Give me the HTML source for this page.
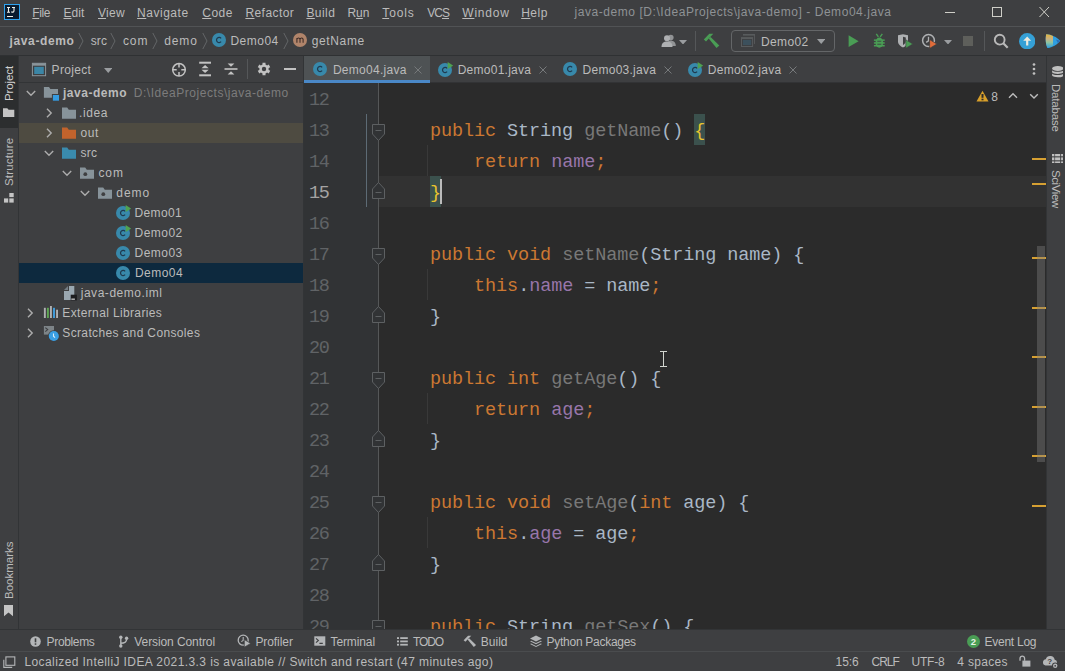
<!DOCTYPE html>
<html><head><meta charset="utf-8"><style>
*{box-sizing:border-box;margin:0;padding:0}
html,body{width:1065px;height:671px;overflow:hidden;background:#3e3f41}
body{font-family:"Liberation Sans",sans-serif;font-size:12px;color:#bbbbbb;position:relative}
.abs{position:absolute}
.t{position:absolute;white-space:pre;line-height:16px}
u{text-decoration:underline;text-underline-offset:.6px;text-decoration-thickness:1px}
.vt{position:absolute;white-space:nowrap;font-size:11.5px;transform-origin:0 0;line-height:14px}
.ln{position:absolute;left:0;width:24.500px;text-align:right;font-family:"Liberation Mono",monospace;font-size:18.500px;letter-spacing:-1.3px;color:#606366;line-height:31px;height:31px}
.cl{position:absolute;left:126.100px;font-family:"Liberation Mono",monospace;font-size:18.500px;letter-spacing:-.1px;color:#a9b7c6;line-height:31px;height:31px;white-space:pre}
.k{color:#cc7832}.f{color:#9876aa}.g{color:#787878}.y{color:#e6c42e}
.mk{position:absolute;left:1032px;width:14px;height:2px;background:#d6a032}
</style></head><body>
<!-- frame lines -->
<div class="abs" style="left:0;top:26px;width:1065px;height:1px;background:#515355"></div>
<div class="abs" style="left:0;top:55px;width:1065px;height:1px;background:#2f3133"></div>
<!-- left strip -->
<div class="abs" style="left:0;top:56px;width:18px;height:72px;background:#2c2e2f"></div>
<div class="abs" style="left:18px;top:56px;width:1px;height:574px;background:#323436"></div>
<!-- right strip -->
<div class="abs" style="left:1047px;top:56px;width:18px;height:574px;background:#3e3f41"></div>
<div class="abs" style="left:1046px;top:56px;width:1px;height:574px;background:#323436"></div>
<!-- project panel -->
<div class="abs" style="left:19px;top:82px;width:284px;height:1px;background:#323436"></div>
<div class="abs" style="left:19px;top:123px;width:284px;height:20px;background:#4e4b41"></div>
<div class="abs" style="left:19px;top:263px;width:284px;height:20px;background:#0d293e"></div>
<div class="abs" style="left:303px;top:56px;width:1px;height:574px;background:#323436"></div>
<!-- tabs -->
<div class="abs" style="left:304px;top:56px;width:126px;height:27px;background:#4e5254"></div>
<div class="abs" style="left:304px;top:80px;width:126px;height:3px;background:#4a88c7"></div>
<div class="abs" style="left:430px;top:82px;width:616px;height:1px;background:#323335"></div>
<!-- editor -->
<div class="abs" style="left:304px;top:83px;width:742px;height:547px;background:#2b2b2b;overflow:hidden">
  <div class="abs" style="left:74px;top:93px;width:668px;height:31px;background:#323232"></div>
  <div class="abs" style="left:0;top:0;width:74px;height:547px;background:#313335"></div>
  <div class="abs" style="left:74px;top:0;width:1px;height:547px;background:#555758"></div>
  <div class="abs" style="left:62px;top:31px;width:1px;height:93px;background:#5d6b75"></div>
  <!-- brace highlights -->
  <div class="abs" style="left:390px;top:31px;width:11px;height:31px;background:#3b514d"></div>
  <div class="abs" style="left:126px;top:93px;width:11px;height:31px;background:#3b514d"></div>
  <!-- indent guides -->
  <div class="abs" style="left:123px;top:62px;width:1px;height:31px;background:#393939"></div>
  <div class="abs" style="left:123px;top:186px;width:1px;height:31px;background:#393939"></div>
  <div class="abs" style="left:123px;top:310px;width:1px;height:31px;background:#393939"></div>
  <div class="abs" style="left:123px;top:434px;width:1px;height:31px;background:#393939"></div>
<span class="ln" style="top:2px">12</span>
<span class="ln" style="top:33px">13</span>
<span class="cl" style="top:33px"><span class="k">public</span> String <span class="g">getName</span>() <span class="y">{</span></span>
<span class="ln" style="top:64px">14</span>
<span class="cl" style="top:64px">    <span class="k">return</span> <span class="f">name</span><span class="k">;</span></span>
<span class="ln" style="top:95px;color:#a4a3a3">15</span>
<span class="cl" style="top:95px"><span class="y">}</span></span>
<span class="ln" style="top:126px">16</span>
<span class="ln" style="top:157px">17</span>
<span class="cl" style="top:157px"><span class="k">public void</span> <span class="g">setName</span>(String name) {</span>
<span class="ln" style="top:188px">18</span>
<span class="cl" style="top:188px">    <span class="k">this</span>.<span class="f">name</span> = name<span class="k">;</span></span>
<span class="ln" style="top:219px">19</span>
<span class="cl" style="top:219px">}</span>
<span class="ln" style="top:250px">20</span>
<span class="ln" style="top:281px">21</span>
<span class="cl" style="top:281px"><span class="k">public int</span> <span class="g">getAge</span>() {</span>
<span class="ln" style="top:312px">22</span>
<span class="cl" style="top:312px">    <span class="k">return</span> <span class="f">age</span><span class="k">;</span></span>
<span class="ln" style="top:343px">23</span>
<span class="cl" style="top:343px">}</span>
<span class="ln" style="top:374px">24</span>
<span class="ln" style="top:405px">25</span>
<span class="cl" style="top:405px"><span class="k">public void</span> <span class="g">setAge</span>(<span class="k">int</span> age) {</span>
<span class="ln" style="top:436px">26</span>
<span class="cl" style="top:436px">    <span class="k">this</span>.<span class="f">age</span> = age<span class="k">;</span></span>
<span class="ln" style="top:467px">27</span>
<span class="cl" style="top:467px">}</span>
<span class="ln" style="top:498px">28</span>
<span class="ln" style="top:529px">29</span>
<span class="cl" style="top:529px"><span class="k">public</span> String <span class="g">getSex</span>() {</span>
<svg class="abs" style="left:67px;top:41px" width="15" height="18" viewBox="0 0 15 18"><path d="M1.500 .5h12v9.500l-6 6.500-6-6.500z" fill="#313335" stroke="#5d6062" stroke-width="1"/><path d="M4.500 6.500h6" stroke="#5d6062" stroke-width="1"/></svg>
<svg class="abs" style="left:67px;top:165px" width="15" height="18" viewBox="0 0 15 18"><path d="M1.500 .5h12v9.500l-6 6.500-6-6.500z" fill="#313335" stroke="#5d6062" stroke-width="1"/><path d="M4.500 6.500h6" stroke="#5d6062" stroke-width="1"/></svg>
<svg class="abs" style="left:67px;top:289px" width="15" height="18" viewBox="0 0 15 18"><path d="M1.500 .5h12v9.500l-6 6.500-6-6.500z" fill="#313335" stroke="#5d6062" stroke-width="1"/><path d="M4.500 6.500h6" stroke="#5d6062" stroke-width="1"/></svg>
<svg class="abs" style="left:67px;top:413px" width="15" height="18" viewBox="0 0 15 18"><path d="M1.500 .5h12v9.500l-6 6.500-6-6.500z" fill="#313335" stroke="#5d6062" stroke-width="1"/><path d="M4.500 6.500h6" stroke="#5d6062" stroke-width="1"/></svg>
<svg class="abs" style="left:67px;top:537px" width="15" height="18" viewBox="0 0 15 18"><path d="M1.500 .5h12v9.500l-6 6.500-6-6.500z" fill="#313335" stroke="#5d6062" stroke-width="1"/><path d="M4.500 6.500h6" stroke="#5d6062" stroke-width="1"/></svg>
<svg class="abs" style="left:67px;top:98px" width="15" height="18" viewBox="0 0 15 18"><path d="M1.500 17.500h12v-9.500l-6-6.500-6 6.500z" fill="#313335" stroke="#5d6062" stroke-width="1"/><path d="M4.500 11.500h6" stroke="#5d6062" stroke-width="1"/></svg>
<svg class="abs" style="left:67px;top:222px" width="15" height="18" viewBox="0 0 15 18"><path d="M1.500 17.500h12v-9.500l-6-6.500-6 6.500z" fill="#313335" stroke="#5d6062" stroke-width="1"/><path d="M4.500 11.500h6" stroke="#5d6062" stroke-width="1"/></svg>
<svg class="abs" style="left:67px;top:346px" width="15" height="18" viewBox="0 0 15 18"><path d="M1.500 17.500h12v-9.500l-6-6.500-6 6.500z" fill="#313335" stroke="#5d6062" stroke-width="1"/><path d="M4.500 11.500h6" stroke="#5d6062" stroke-width="1"/></svg>
<svg class="abs" style="left:67px;top:470px" width="15" height="18" viewBox="0 0 15 18"><path d="M1.500 17.500h12v-9.500l-6-6.500-6 6.500z" fill="#313335" stroke="#5d6062" stroke-width="1"/><path d="M4.500 11.500h6" stroke="#5d6062" stroke-width="1"/></svg>
  <div class="abs" style="left:136px;top:96px;width:2px;height:25px;background:#bbbbbb"></div>
</div>
<div class="mk" style="top:158px"></div>
<div class="mk" style="top:183px"></div>
<div class="mk" style="top:257px"></div>
<div class="mk" style="top:307px"></div>
<div class="mk" style="top:356px"></div>
<div class="mk" style="top:406px"></div>
<div class="mk" style="top:455px"></div>
<div class="mk" style="top:505px"></div>
<div class="abs" style="left:1037px;top:246px;width:8px;height:216px;background:rgba(128,128,128,.4)"></div>
<!-- mouse ibeam -->
<div class="abs" style="left:663px;top:351px;width:1px;height:16px;background:#d2d5cf"></div>
<div class="abs" style="left:660px;top:351px;width:7px;height:1px;background:#d2d5cf"></div>
<div class="abs" style="left:660px;top:366px;width:7px;height:1px;background:#d2d5cf"></div>
<!-- bottom -->
<div class="abs" style="left:0;top:630px;width:1065px;height:41px;background:#3e3f41"></div>
<div class="abs" style="left:0;top:629px;width:1065px;height:1px;background:#323436"></div>
<div class="abs" style="left:0;top:651px;width:1065px;height:1px;background:#4a4c4e"></div>
<svg class="abs" style="left:4px;top:4px" width="16" height="16" viewBox="0 0 16 16"><rect width="16" height="16" fill="#2fa3ef"/><rect x="1" y="1" width="14" height="14" fill="#0a1b2e"/><path d="M3 3.500h3M4.500 3.500v4.700M3 8.200h3M8 3.500h3M10 3.500v3.300c0 1.500-1.400 1.700-2.700 .9" stroke="#f2f2ea" stroke-width="1.100" fill="none"/><rect x="3" y="12" width="6" height="1" fill="#f2f2ea"/></svg>
<svg class="abs" style="left:935px;top:0px" width="130" height="26" viewBox="0 0 130 26"><g stroke="#cfcfc8" stroke-width="1" fill="none"><path d="M10 12.500H20"/><rect x="57.500" y="7.500" width="9" height="9"/><path d="M104.500 7l9.500 10M114 7l-9.500 10"/></g></svg>
<svg class="abs" style="left:77.5px;top:32px" width="6" height="18" viewBox="0 0 6 18"><path d="M0.8 1L5 9 .8 17" fill="none" stroke="#646668" stroke-width="1"/></svg>
<svg class="abs" style="left:110.2px;top:32px" width="6" height="18" viewBox="0 0 6 18"><path d="M0.8 1L5 9 .8 17" fill="none" stroke="#646668" stroke-width="1"/></svg>
<svg class="abs" style="left:151.5px;top:32px" width="6" height="18" viewBox="0 0 6 18"><path d="M0.8 1L5 9 .8 17" fill="none" stroke="#646668" stroke-width="1"/></svg>
<svg class="abs" style="left:202px;top:32px" width="6" height="18" viewBox="0 0 6 18"><path d="M0.8 1L5 9 .8 17" fill="none" stroke="#646668" stroke-width="1"/></svg>
<svg class="abs" style="left:282.5px;top:32px" width="6" height="18" viewBox="0 0 6 18"><path d="M0.8 1L5 9 .8 17" fill="none" stroke="#646668" stroke-width="1"/></svg>
<svg class="abs" style="left:211px;top:32.2px" width="16" height="16" viewBox="0 0 16 16"><circle cx="8" cy="8" r="7" fill="#3889ab"/><path d="M10.100 9.700A2.600 2.600 0 1 1 10.100 6.300" fill="none" stroke="#1f3a4f" stroke-width="1.250"/></svg>
<svg class="abs" style="left:291.9px;top:32.2px" width="16" height="16" viewBox="0 0 16 16"><circle cx="8" cy="8" r="7" fill="#b0846a"/><path d="M4.900 10.700V5.900M4.900 7.400c.4-1.900 2.900-2 3.100 0v3.300M8 7.400c.4-1.900 2.900-2 3.100 0v3.300" fill="none" stroke="#3a2a26" stroke-width="1.050"/></svg>
<svg class="abs" style="left:661px;top:34px" width="16" height="14" viewBox="0 0 16 14"><g fill="#aeb0b2"><circle cx="9.800" cy="3.600" r="2.800" opacity=".75"/><path d="M5.500 12c0-4 2-5.200 4.300-5.200S14.800 8 14.800 12z" opacity=".75"/><circle cx="6" cy="4.200" r="3"/><path d="M.5 13c0-4.200 2.200-5.600 5.500-5.600S11.500 8.800 11.500 13z"/></g></svg>
<svg class="abs" style="left:679px;top:39.75px" width="8" height="4.5" viewBox="0 0 8 4.5"><path d="M0 0H8 L4 4.5z" fill="#9a9da0"/></svg>
<div class="abs" style="left:695px;top:31px;width:1px;height:20px;background:#555759"></div>
<svg class="abs" style="left:703px;top:33px" width="17" height="16" viewBox="0 0 17 16"><g fill="#4a9d55"><path d="M0.800 6.600L6.300 0.800H10.300L3 8.500z"/><path d="M5.700 5.600L7.600 4L16.300 12.600L13.500 15.100z"/></g></svg>
<div class="abs" style="left:731px;top:30px;width:104px;height:22px;border:1px solid #646668;border-radius:4px"></div>
<svg class="abs" style="left:740px;top:33px" width="16" height="15" viewBox="0 0 16 15"><g fill="#585b5d"><rect x="3" y="1" width="12" height="1.600"/><rect x="14.100" y="1" width=".9" height="9.900"/><rect x="1" y="4.100" width="12.100" height="9.900"/></g><rect x="2" y="6.100" width="10.100" height="6.900" fill="#3e3f41"/><rect x="2.900" y="6.900" width="8.300" height="5.200" fill="#3c505c"/></svg>
<svg class="abs" style="left:817.1px;top:39px" width="8.4" height="5" viewBox="0 0 8.4 5"><path d="M0 0H8.4 L4.2 5z" fill="#9a9da0"/></svg>
<svg class="abs" style="left:848px;top:35px" width="12" height="13" viewBox="0 0 12 13"><path d="M.6 .3v11.700L10.600 6.150z" fill="#4a9d55"/></svg>
<svg class="abs" style="left:871px;top:33px" width="16" height="16" viewBox="0 0 16 16"><g fill="#4a9d55"><ellipse cx="8.300" cy="9.700" rx="3.800" ry="5.100"/><rect x="2.900" y="6.400" width="10.800" height="1.500"/><rect x="2.900" y="9.200" width="10.800" height="1.500"/><rect x="2.900" y="12" width="10.800" height="1.500"/><path d="M5.300 .9L7.400 3.900M11.300 .9L9.200 3.900" stroke="#4a9d55" stroke-width="1.400" fill="none"/></g><path d="M6.300 8.300h4M6.300 11.200h4" stroke="#3e3f41" stroke-width="1.100" opacity=".85"/></svg>
<svg class="abs" style="left:897px;top:34px" width="17" height="15" viewBox="0 0 17 15"><path d="M1 1.200l5-1 5 1v6c0 3.200-2.400 5-5 6.200C3.400 12.200 1 10.400 1 7.200z" fill="#aeb0b2"/><path d="M6 2.800v8.200c1.800-1 2.800-2.200 2.800-4V3.400z" fill="#3e3f41"/><path d="M8.800 5.800v8.400l7-4.200z" fill="#4a9d55" stroke="#3e3f41" stroke-width=".6"/></svg>
<svg class="abs" style="left:921px;top:33px" width="17" height="16" viewBox="0 0 17 16"><circle cx="7.500" cy="7.500" r="5.900" fill="none" stroke="#aeb0b2" stroke-width="1.500"/><path d="M7.500 3.800v4l-2.300 1.600" fill="none" stroke="#aeb0b2" stroke-width="1.300"/><path d="M8.600 6.600v8.800l7.300-4.400z" fill="#e06c3a" stroke="#3e3f41" stroke-width=".7"/></svg>
<svg class="abs" style="left:943.8px;top:39.75px" width="8" height="4.5" viewBox="0 0 8 4.5"><path d="M0 0H8 L4 4.5z" fill="#9a9da0"/></svg>
<div class="abs" style="left:963px;top:36px;width:10px;height:10px;background:#5e5f5b"></div>
<div class="abs" style="left:984px;top:31px;width:1px;height:20px;background:#555759"></div>
<svg class="abs" style="left:993px;top:33px" width="17" height="17" viewBox="0 0 17 17"><circle cx="6.700" cy="6.700" r="4.900" fill="none" stroke="#b9b9b9" stroke-width="1.900"/><path d="M10.300 10.300l4.400 4.400" stroke="#b9b9b9" stroke-width="2.200"/></svg>
<svg class="abs" style="left:1018.8px;top:32.7px" width="16.4" height="16.4" viewBox="0 0 16.4 16.4"><circle cx="8.200" cy="8.200" r="8.200" fill="#35a0d6"/><path d="M8.200 3.400l4 4.400H9.300V12.500H7.100V7.800H4.200z" fill="#eceade"/></svg>
<svg class="abs" style="left:1045px;top:33px" width="16" height="16" viewBox="0 0 16 16"><defs><linearGradient id="cg" x1="0" y1="0" x2="0" y2="1"><stop offset="0" stop-color="#e3b53b"/><stop offset=".35" stop-color="#c9b183"/><stop offset=".6" stop-color="#8fc4a0"/><stop offset="1" stop-color="#2b9fe3"/></linearGradient></defs><path d="M1.200 1.200c5 .3 10.500 2.600 14 6.600-3 4-8 6.600-12.600 7.200C.4 11 .4 5 1.200 1.200z" fill="#2f9fe0"/><path d="M1.200 1.200c2.500.2 4.800.8 6.800 1.800v9.500c-1.800 1.200-3.600 2-5.400 2.500C.4 11 .4 5 1.200 1.200z" fill="url(#cg)"/><path d="M11 6.500l4.200 1.300-2.200 2.400z" fill="#2b6fb8"/></svg>
<svg class="abs" style="left:3px;top:108px" width="12" height="9" viewBox="0 0 12 9"><path d="M0 .3h4.300l1.300 1.500H11.300V8.900H0z" fill="#c4c4c4"/></svg>
<svg class="abs" style="left:3.7px;top:192.7px" width="10" height="10" viewBox="0 0 10 10"><g fill="#c4c4c4"><rect x="5.3" y="0" width="4.4" height="4.1"/><rect x="0" y="5.4" width="4.2" height="4.2"/><rect x="5.3" y="5.4" width="4.4" height="4.2"/></g></svg>
<svg class="abs" style="left:4px;top:605px" width="10" height="12" viewBox="0 0 10 12"><path d="M0 0h9v11.200L4.500 7.400 0 11.200z" fill="#c4c4c4"/></svg>
<svg class="abs" style="left:1051.8px;top:66px" width="11.6" height="12.4" viewBox="0 0 11.6 12.4"><g fill="#c0c0c0"><ellipse cx="5.8" cy="2.5" rx="5.7" ry="2.4"/><path d="M.1 4.2c1.2 2.1 10.2 2.1 11.4 0v2.1c-1.2 2.2-10.2 2.2-11.400 0zM.1 7.500c1.200 2.100 10.200 2.100 11.400 0v2.100c-1.200 2.300-10.200 2.300-11.400 0z"/></g></svg>
<svg class="abs" style="left:1051.8px;top:153.7px" width="11.6" height="9.6" viewBox="0 0 11.6 9.6"><g fill="#c0c0c0"><rect x="0" y="0" width="2.4" height="2.3"/><rect x="0" y="3.4" width="2.4" height="2.9"/><rect x="0" y="7.4" width="2.4" height="2.1"/><rect x="3.1" y="0" width="5.1" height="2.3"/><rect x="3.1" y="3.4" width="5.1" height="2.9"/><rect x="3.1" y="7.4" width="5.1" height="2.1"/><rect x="9.1" y="0" width="2.4" height="2.3"/><rect x="9.1" y="3.4" width="2.4" height="2.9"/><rect x="9.1" y="7.4" width="2.4" height="2.1"/></g></svg>
<svg class="abs" style="left:31px;top:62px" width="16" height="15" viewBox="0 0 16 15"><rect x="1.400" y="1.300" width="13.200" height="12.400" fill="#3e3f41" stroke="#8a959b" stroke-width="1"/><rect x="1.400" y="1.300" width="13.200" height="2.400" fill="#8a959b"/><rect x="3.200" y="4.800" width="9.600" height="7.200" fill="#3b86a6"/></svg>
<svg class="abs" style="left:103.75px;top:67.8px" width="8.5" height="5" viewBox="0 0 8.5 5"><path d="M0 0H8.5 L4.25 5z" fill="#9a9da0"/></svg>
<svg class="abs" style="left:171px;top:61.5px" width="16" height="16" viewBox="0 0 16 16"><g fill="none" stroke="#c2c2c2" stroke-width="1.500"><circle cx="8" cy="7.800" r="6.300"/><path d="M8 1.500v4M8 10v4M1.700 7.800h4M10.300 7.800h4"/></g></svg>
<svg class="abs" style="left:198px;top:61px" width="14" height="16" viewBox="0 0 14 16"><g fill="#c2c2c2"><rect x="1.2" y="0.7" width="11.8" height="2"/><rect x="1.2" y="13.3" width="11.8" height="2"/><path d="M7.100 3.900l3.600 3.300H3.500zM7.100 12.100l3.600-3.300H3.500z"/></g></svg>
<svg class="abs" style="left:224px;top:61px" width="14" height="16" viewBox="0 0 14 16"><g fill="#c2c2c2"><rect x="0.500" y="7.200" width="13" height="1.600"/><path d="M7 5.800l3.400-3.400H3.600zM7 10.200l3.400 3.400H3.600z"/></g></svg>
<div class="abs" style="left:247px;top:59px;width:1px;height:20px;background:#555759"></div>
<svg class="abs" style="left:257px;top:62px" width="14" height="14" viewBox="0 0 14 14"><path d="M5.50 2.55 L5.48 0.68 L8.52 0.68 L8.50 2.55 L10.11 3.47 L11.71 2.53 L13.23 5.15 L11.61 6.07 L11.61 7.93 L13.23 8.85 L11.71 11.47 L10.11 10.53 L8.50 11.45 L8.52 13.32 L5.48 13.32 L5.50 11.45 L3.89 10.53 L2.29 11.47 L0.77 8.85 L2.39 7.93 L2.39 6.07 L0.77 5.15 L2.29 2.53 L3.89 3.47z" fill="#c2c2c2"/><circle cx="7" cy="7" r="2.2" fill="#3e3f41"/></svg>
<div class="abs" style="left:284px;top:68px;width:12px;height:2px;background:#c2c2c2"></div>
<svg class="abs" style="left:24.8px;top:86.6px" width="12" height="12" viewBox="0 0 12 12"><path d="M1.8 4L6 8.2 10.200 4" fill="none" stroke="#adadad" stroke-width="1.4"/></svg>
<svg class="abs" style="left:43px;top:85px" width="17" height="17" viewBox="0 0 17 17"><path d="M.9 2h5.100l1.400 1.900H15V12.800H.9z" fill="#87939a"/><rect x="8.900" y="9" width="8.100" height="8" fill="#3e3f41"/><rect x="9.900" y="10" width="6.100" height="5.700" fill="#359be0"/></svg>
<svg class="abs" style="left:42.5px;top:106.7px" width="12" height="12" viewBox="0 0 12 12"><path d="M4 1.800L8.2 6 4 10.200" fill="none" stroke="#adadad" stroke-width="1.4"/></svg>
<svg class="abs" style="left:61px;top:105px" width="16" height="16" viewBox="0 0 16 16"><path d="M1 2.6h5.2l1.6 2.2H15V13.8H1z" fill="#87939a"/></svg>
<svg class="abs" style="left:42.5px;top:126.7px" width="12" height="12" viewBox="0 0 12 12"><path d="M4 1.800L8.2 6 4 10.200" fill="none" stroke="#adadad" stroke-width="1.4"/></svg>
<svg class="abs" style="left:61px;top:125px" width="16" height="16" viewBox="0 0 16 16"><path d="M1 2.6h5.2l1.6 2.2H15V13.8H1z" fill="#c1632c"/></svg>
<svg class="abs" style="left:42.9px;top:146.6px" width="12" height="12" viewBox="0 0 12 12"><path d="M1.8 4L6 8.2 10.200 4" fill="none" stroke="#adadad" stroke-width="1.4"/></svg>
<svg class="abs" style="left:61px;top:145px" width="16" height="16" viewBox="0 0 16 16"><path d="M1 2.6h5.2l1.6 2.2H15V13.8H1z" fill="#3a8bad"/></svg>
<svg class="abs" style="left:60.7px;top:166.6px" width="12" height="12" viewBox="0 0 12 12"><path d="M1.8 4L6 8.2 10.200 4" fill="none" stroke="#adadad" stroke-width="1.4"/></svg>
<svg class="abs" style="left:79px;top:165px" width="16" height="16" viewBox="0 0 16 16"><path d="M1 2.6h5.2l1.6 2.2H15V13.8H1z" fill="#87939a"/><circle cx="6.3" cy="9.2" r="1.9" fill="#3e3f41"/></svg>
<svg class="abs" style="left:78.6px;top:186.6px" width="12" height="12" viewBox="0 0 12 12"><path d="M1.8 4L6 8.2 10.200 4" fill="none" stroke="#adadad" stroke-width="1.4"/></svg>
<svg class="abs" style="left:97px;top:185px" width="16" height="16" viewBox="0 0 16 16"><path d="M1 2.6h5.2l1.6 2.2H15V13.8H1z" fill="#87939a"/><circle cx="6.3" cy="9.2" r="1.9" fill="#3e3f41"/></svg>
<svg class="abs" style="left:115px;top:204.7px" width="16" height="16" viewBox="0 0 16 16"><circle cx="8" cy="8" r="7" fill="#3889ab"/><path d="M10.100 9.700A2.600 2.600 0 1 1 10.100 6.300" fill="none" stroke="#1f3a4f" stroke-width="1.250"/><path d="M10.700 0.100v7l5.500-3.500z" fill="#4fa251"/></svg>
<svg class="abs" style="left:115px;top:224.7px" width="16" height="16" viewBox="0 0 16 16"><circle cx="8" cy="8" r="7" fill="#3889ab"/><path d="M10.100 9.700A2.600 2.600 0 1 1 10.100 6.300" fill="none" stroke="#1f3a4f" stroke-width="1.250"/><path d="M10.700 0.100v7l5.500-3.500z" fill="#4fa251"/></svg>
<svg class="abs" style="left:115px;top:244.7px" width="16" height="16" viewBox="0 0 16 16"><circle cx="8" cy="8" r="7" fill="#3889ab"/><path d="M10.100 9.700A2.600 2.600 0 1 1 10.100 6.300" fill="none" stroke="#1f3a4f" stroke-width="1.250"/></svg>
<svg class="abs" style="left:115px;top:264.7px" width="16" height="16" viewBox="0 0 16 16"><circle cx="8" cy="8" r="7" fill="#3889ab"/><path d="M10.100 9.700A2.600 2.600 0 1 1 10.100 6.300" fill="none" stroke="#1f3a4f" stroke-width="1.250"/></svg>
<svg class="abs" style="left:61px;top:285px" width="17" height="17" viewBox="0 0 17 17"><path d="M8 1V6H3V14.9H13.300V1z" fill="#9aa7b0"/><path d="M7 1L3 5H7z" fill="#9aa7b0" opacity=".6"/><rect x="9.700" y="9.700" width="6.200" height="5.700" fill="#1d1d1f"/><rect x="10.300" y="13.600" width="3.600" height="1.100" fill="#e6e6e6"/></svg>
<svg class="abs" style="left:24.3px;top:306.7px" width="12" height="12" viewBox="0 0 12 12"><path d="M4 1.800L8.2 6 4 10.200" fill="none" stroke="#adadad" stroke-width="1.4"/></svg>
<svg class="abs" style="left:43px;top:305px" width="16" height="16" viewBox="0 0 16 16"><rect x="0.9" y="2.8" width="1.900" height="10.2" fill="#aeb0b2"/><rect x="3.95" y="2.8" width="1.900" height="10.2" fill="#5fa654"/><rect x="7" y="1" width="1.900" height="12" fill="#aeb0b2"/><rect x="10.05" y="2.8" width="1.900" height="10.2" fill="#3f9fe0"/><rect x="13.1" y="4.7" width="1.900" height="8.3" fill="#aeb0b2"/></svg>
<svg class="abs" style="left:24.3px;top:326.7px" width="12" height="12" viewBox="0 0 12 12"><path d="M4 1.800L8.2 6 4 10.200" fill="none" stroke="#adadad" stroke-width="1.4"/></svg>
<svg class="abs" style="left:43px;top:324px" width="17" height="18" viewBox="0 0 17 18"><rect x="0.900" y="2" width="10.100" height="8.600" fill="#7d8488"/><path d="M2.300 3.600l2.400 2L2.300 7.600" stroke="#3e3f41" stroke-width="1.100" fill="none"/><circle cx="10.800" cy="12" r="5.700" fill="#3e3f41"/><circle cx="10.800" cy="12" r="5.050" fill="#3a9fe4"/><path d="M10.500 9.600v2.600l1.500 1.500" stroke="#d8edf9" stroke-width="1.100" fill="none"/></svg>
<svg class="abs" style="left:312px;top:61.2px" width="16" height="16" viewBox="0 0 16 16"><circle cx="8" cy="8" r="7" fill="#3889ab"/><path d="M10.100 9.700A2.600 2.600 0 1 1 10.100 6.300" fill="none" stroke="#1f3a4f" stroke-width="1.250"/></svg>
<svg class="abs" style="left:413.4px;top:64.5px" width="10" height="10" viewBox="0 0 10 10"><path d="M1.500 1.500l7 7M8.500 1.500l-7 7" stroke="#76797b" stroke-width="1" fill="none"/></svg>
<svg class="abs" style="left:437px;top:61.7px" width="16" height="16" viewBox="0 0 16 16"><circle cx="8" cy="8" r="7" fill="#3889ab"/><path d="M10.100 9.700A2.600 2.600 0 1 1 10.100 6.300" fill="none" stroke="#1f3a4f" stroke-width="1.250"/><path d="M10.700 0.100v7l5.500-3.500z" fill="#4fa251"/></svg>
<svg class="abs" style="left:538px;top:64.5px" width="10" height="10" viewBox="0 0 10 10"><path d="M1.500 1.500l7 7M8.500 1.500l-7 7" stroke="#76797b" stroke-width="1" fill="none"/></svg>
<svg class="abs" style="left:562px;top:61.2px" width="16" height="16" viewBox="0 0 16 16"><circle cx="8" cy="8" r="7" fill="#3889ab"/><path d="M10.100 9.700A2.600 2.600 0 1 1 10.100 6.300" fill="none" stroke="#1f3a4f" stroke-width="1.250"/></svg>
<svg class="abs" style="left:663.3px;top:64.5px" width="10" height="10" viewBox="0 0 10 10"><path d="M1.500 1.500l7 7M8.500 1.500l-7 7" stroke="#76797b" stroke-width="1" fill="none"/></svg>
<svg class="abs" style="left:687px;top:61.7px" width="16" height="16" viewBox="0 0 16 16"><circle cx="8" cy="8" r="7" fill="#3889ab"/><path d="M10.100 9.700A2.600 2.600 0 1 1 10.100 6.300" fill="none" stroke="#1f3a4f" stroke-width="1.250"/><path d="M10.700 0.100v7l5.500-3.500z" fill="#4fa251"/></svg>
<svg class="abs" style="left:788.3px;top:64.5px" width="10" height="10" viewBox="0 0 10 10"><path d="M1.500 1.500l7 7M8.500 1.500l-7 7" stroke="#76797b" stroke-width="1" fill="none"/></svg>
<svg class="abs" style="left:1031px;top:62px" width="6" height="14" viewBox="0 0 6 14"><g fill="#c2c2c2"><circle cx="3" cy="2.500" r="1.350"/><circle cx="3" cy="7" r="1.350"/><circle cx="3" cy="11.500" r="1.350"/></g></svg>
<svg class="abs" style="left:975.5px;top:89.5px" width="13" height="12" viewBox="0 0 13 12"><path d="M6.500 .8L12.500 11.400H.5z" fill="#d9a02a"/><rect x="5.500" y="4" width="2" height="3.800" fill="#2b2b2b"/><rect x="5.500" y="8.700" width="2" height="1.600" fill="#2b2b2b"/></svg>
<svg class="abs" style="left:1008px;top:92px" width="10" height="7" viewBox="0 0 10 7"><path d="M1 5.800L5 1.800 9 5.800" fill="none" stroke="#bdbdbd" stroke-width="1.400"/></svg>
<svg class="abs" style="left:1029px;top:93px" width="10" height="7" viewBox="0 0 10 7"><path d="M1.200 1.200L5 5 8.800 1.200" fill="none" stroke="#bdbdbd" stroke-width="1.400"/></svg>
<svg class="abs" style="left:30px;top:636px" width="11" height="11" viewBox="0 0 11 11"><circle cx="5.500" cy="5.500" r="5.300" fill="#b4b6b8"/><rect x="4.700" y="2.300" width="1.600" height="4" fill="#3e3f41"/><rect x="4.700" y="7.300" width="1.600" height="1.500" fill="#3e3f41"/></svg>
<svg class="abs" style="left:118px;top:635px" width="11" height="13" viewBox="0 0 11 13"><g fill="none" stroke="#b4b6b8" stroke-width="1.400"><path d="M2.800 1.500v10.500M2.800 8.200c4.500 0 5.800-1.500 5.800-4"/></g><circle cx="2.800" cy="2.200" r="1.700" fill="#b4b6b8"/><circle cx="8.600" cy="3.200" r="1.700" fill="#b4b6b8"/><circle cx="2.800" cy="11" r="1.700" fill="#b4b6b8"/></svg>
<svg class="abs" style="left:237px;top:634px" width="15" height="14" viewBox="0 0 15 14"><circle cx="6.200" cy="6.200" r="5" fill="none" stroke="#b4b6b8" stroke-width="1.300"/><path d="M6.200 3v3.400L4.300 7.600" fill="none" stroke="#b4b6b8" stroke-width="1.100"/><path d="M7.300 5.600v7.600l6.400-3.800z" fill="#b4b6b8" stroke="#3e3f41" stroke-width=".7"/></svg>
<svg class="abs" style="left:313.5px;top:636px" width="12" height="10" viewBox="0 0 12 10"><rect x=".3" y=".3" width="11" height="9.400" fill="#b4b6b8"/><path d="M2 2.400l2.400 2.100L2 6.600M5.400 7.400h3.400" stroke="#3e3f41" stroke-width="1.100" fill="none"/></svg>
<svg class="abs" style="left:396.5px;top:637px" width="11" height="9" viewBox="0 0 11 9"><g fill="#b4b6b8"><rect x="0" y=".2" width="2" height="1.800"/><rect x="3.200" y=".2" width="7.600" height="1.800"/><rect x="0" y="3.500" width="2" height="1.800"/><rect x="3.200" y="3.500" width="7.600" height="1.800"/><rect x="0" y="6.800" width="2" height="1.800"/><rect x="3.200" y="6.800" width="7.600" height="1.800"/></g></svg>
<svg class="abs" style="left:463px;top:635px" width="14" height="13" viewBox="0 0 14 13"><g fill="#b4b6b8" transform="scale(.8)"><path d="M0.800 6.600L6.300 0.800H10.300L3 8.500z"/><path d="M5.700 5.600L7.600 4L16.300 12.600L13.500 15.100z"/></g></svg>
<svg class="abs" style="left:529.5px;top:635px" width="12" height="13" viewBox="0 0 12 13"><g fill="#b4b6b8"><path d="M6 .5l6 3-6 3-6-3z"/><path d="M1.200 5.700L0 6.300l6 3 6-3-1.200-.6L6 8z"/><path d="M1.200 8.500L0 9.100l6 3 6-3-1.200-.6-4.800 2.400z"/></g></svg>
<svg class="abs" style="left:966.8px;top:635px" width="13" height="13" viewBox="0 0 13 13"><circle cx="6.500" cy="6.500" r="6.500" fill="#4a9d55"/><text x="6.500" y="10" text-anchor="middle" font-family="Liberation Sans" font-size="9.500" font-weight="bold" fill="#e6f2e6">2</text></svg>
<svg class="abs" style="left:2.5px;top:655.5px" width="13" height="12" viewBox="0 0 13 12"><g fill="none" stroke="#b4b6b8" stroke-width="1.100"><rect x="2.900" y=".900" width="8.900" height="8.400"/><path d="M.8 3.800V11.400h8.400"/></g></svg>
<svg class="abs" style="left:1019px;top:655px" width="12" height="12" viewBox="0 0 12 12"><rect x="3.400" y="5.600" width="8" height="6" fill="#b4b6b8"/><path d="M1 5.800V3.400a2.300 2.300 0 0 1 4.600 0v2.400" fill="none" stroke="#b4b6b8" stroke-width="1.300"/></svg>
<svg class="abs" style="left:1042px;top:654.5px" width="17" height="14" viewBox="0 0 17 14"><path d="M3.500 10.500a3.200 3.200 0 0 1 .3-6.300A4.600 4.600 0 0 1 12.700 4.800a3 3 0 0 1 .6 5.700z" fill="#b4b6b8"/><text x="7.800" y="9" text-anchor="middle" font-family="Liberation Sans" font-weight="bold" font-size="8" fill="#3e3f41">?</text><circle cx="13.200" cy="10.800" r="3.200" fill="#3e3f41"/><circle cx="13.200" cy="10.800" r="2.200" fill="#b4b6b8"/><circle cx="13.200" cy="10.800" r=".9" fill="#3e3f41"/></svg>
<span class="t" style="left:32.30px;top:4.84px;font-size:12px;letter-spacing:-0.421px;color:#bbbbbb;"><u>F</u>ile</span>
<span class="t" style="left:63.50px;top:4.84px;font-size:12px;letter-spacing:0.019px;color:#bbbbbb;"><u>E</u>dit</span>
<span class="t" style="left:98.00px;top:4.84px;font-size:12px;letter-spacing:0.258px;color:#bbbbbb;"><u>V</u>iew</span>
<span class="t" style="left:137.10px;top:4.84px;font-size:12px;letter-spacing:0.516px;color:#bbbbbb;"><u>N</u>avigate</span>
<span class="t" style="left:202.20px;top:4.84px;font-size:12px;letter-spacing:0.529px;color:#bbbbbb;"><u>C</u>ode</span>
<span class="t" style="left:245.40px;top:4.84px;font-size:12px;letter-spacing:0.435px;color:#bbbbbb;"><u>R</u>efactor</span>
<span class="t" style="left:306.40px;top:4.84px;font-size:12px;letter-spacing:0.448px;color:#bbbbbb;"><u>B</u>uild</span>
<span class="t" style="left:347.40px;top:4.84px;font-size:12px;letter-spacing:0.030px;color:#bbbbbb;">R<u>u</u>n</span>
<span class="t" style="left:382.30px;top:4.84px;font-size:12px;letter-spacing:0.872px;color:#bbbbbb;"><u>T</u>ools</span>
<span class="t" style="left:427.30px;top:4.84px;font-size:12px;letter-spacing:-0.985px;color:#bbbbbb;">VC<u>S</u></span>
<span class="t" style="left:462.30px;top:4.84px;font-size:12px;letter-spacing:0.777px;color:#bbbbbb;"><u>W</u>indow</span>
<span class="t" style="left:521.20px;top:4.84px;font-size:12px;letter-spacing:0.498px;color:#bbbbbb;"><u>H</u>elp</span>
<span class="t" style="left:574.60px;top:3.84px;font-size:12px;letter-spacing:0.550px;color:#8e9295;">java-demo [D:&#92;IdeaProjects&#92;java-demo] - Demo04.java</span>
<span class="t" style="left:9.50px;top:32.84px;font-size:12px;letter-spacing:0.634px;color:#bbbbbb;font-weight:bold;">java-demo</span>
<span class="t" style="left:90.70px;top:32.84px;font-size:12px;letter-spacing:0.152px;color:#bbbbbb;">src</span>
<span class="t" style="left:123.00px;top:32.84px;font-size:12px;letter-spacing:0.863px;color:#bbbbbb;">com</span>
<span class="t" style="left:164.30px;top:32.84px;font-size:12px;letter-spacing:0.852px;color:#bbbbbb;">demo</span>
<span class="t" style="left:230.40px;top:32.84px;font-size:12px;letter-spacing:0.503px;color:#bbbbbb;">Demo04</span>
<span class="t" style="left:311.70px;top:32.84px;font-size:12px;letter-spacing:0.647px;color:#bbbbbb;">getName</span>
<span class="t" style="left:760.90px;top:33.84px;font-size:12px;letter-spacing:0.403px;color:#bbbbbb;">Demo02</span>
<span class="t" style="left:51.60px;top:61.84px;font-size:12px;letter-spacing:0.314px;color:#bbbbbb;">Project</span>
<span class="t" style="left:332.90px;top:61.84px;font-size:12px;letter-spacing:0.277px;color:#bbbbbb;">Demo04.java</span>
<span class="t" style="left:457.70px;top:61.84px;font-size:12px;letter-spacing:0.257px;color:#bbbbbb;">Demo01.java</span>
<span class="t" style="left:582.60px;top:61.84px;font-size:12px;letter-spacing:0.257px;color:#bbbbbb;">Demo03.java</span>
<span class="t" style="left:707.80px;top:61.84px;font-size:12px;letter-spacing:0.257px;color:#bbbbbb;">Demo02.java</span>
<span class="t" style="left:63.00px;top:84.84px;font-size:12px;letter-spacing:0.522px;color:#bbbbbb;font-weight:bold;">java-demo</span>
<span class="t" style="left:133.70px;top:84.84px;font-size:12px;letter-spacing:0.549px;color:#7c7c7c;">D:&#92;IdeaProjects&#92;java-demo</span>
<span class="t" style="left:79.10px;top:104.84px;font-size:12px;letter-spacing:0.563px;color:#bbbbbb;">.idea</span>
<span class="t" style="left:80.50px;top:124.84px;font-size:12px;letter-spacing:0.526px;color:#bbbbbb;">out</span>
<span class="t" style="left:80.50px;top:144.84px;font-size:12px;letter-spacing:0.252px;color:#bbbbbb;">src</span>
<span class="t" style="left:98.50px;top:164.84px;font-size:12px;letter-spacing:0.863px;color:#bbbbbb;">com</span>
<span class="t" style="left:116.30px;top:184.84px;font-size:12px;letter-spacing:0.985px;color:#bbbbbb;">demo</span>
<span class="t" style="left:134.60px;top:204.84px;font-size:12px;letter-spacing:0.343px;color:#bbbbbb;">Demo01</span>
<span class="t" style="left:134.60px;top:224.84px;font-size:12px;letter-spacing:0.463px;color:#bbbbbb;">Demo02</span>
<span class="t" style="left:134.60px;top:244.84px;font-size:12px;letter-spacing:0.463px;color:#bbbbbb;">Demo03</span>
<span class="t" style="left:134.90px;top:264.84px;font-size:12px;letter-spacing:0.483px;color:#bbbbbb;">Demo04</span>
<span class="t" style="left:80.70px;top:284.84px;font-size:12px;letter-spacing:0.540px;color:#bbbbbb;">java-demo.iml</span>
<span class="t" style="left:62.30px;top:304.84px;font-size:12px;letter-spacing:0.360px;color:#bbbbbb;">External Libraries</span>
<span class="t" style="left:62.30px;top:324.84px;font-size:12px;letter-spacing:0.358px;color:#bbbbbb;">Scratches and Consoles</span>
<span class="t" style="left:46.60px;top:633.84px;font-size:12px;letter-spacing:-0.355px;color:#bbbbbb;">Problems</span>
<span class="t" style="left:134.30px;top:633.84px;font-size:12px;letter-spacing:-0.091px;color:#bbbbbb;">Version Control</span>
<span class="t" style="left:255.40px;top:633.84px;font-size:12px;letter-spacing:-0.073px;color:#bbbbbb;">Profiler</span>
<span class="t" style="left:330.50px;top:633.84px;font-size:12px;letter-spacing:-0.111px;color:#bbbbbb;">Terminal</span>
<span class="t" style="left:412.90px;top:633.84px;font-size:12px;letter-spacing:-1.071px;color:#bbbbbb;">TODO</span>
<span class="t" style="left:480.80px;top:633.84px;font-size:12px;letter-spacing:-0.002px;color:#bbbbbb;">Build</span>
<span class="t" style="left:546.60px;top:633.84px;font-size:12px;letter-spacing:-0.278px;color:#bbbbbb;">Python Packages</span>
<span class="t" style="left:984.50px;top:633.84px;font-size:12px;letter-spacing:-0.258px;color:#bbbbbb;">Event Log</span>
<span class="t" style="left:24.40px;top:653.84px;font-size:12px;letter-spacing:0.413px;color:#bbbbbb;">Localized IntelliJ IDEA 2021.3.3 is available // Switch and restart (47 minutes ago)</span>
<span class="t" style="left:835.60px;top:653.84px;font-size:12px;letter-spacing:-0.061px;color:#bbbbbb;">15:6</span>
<span class="t" style="left:871.50px;top:653.84px;font-size:12px;letter-spacing:-1.035px;color:#bbbbbb;">CRLF</span>
<span class="t" style="left:911.60px;top:653.84px;font-size:12px;letter-spacing:-0.256px;color:#bbbbbb;">UTF-8</span>
<span class="t" style="left:957.30px;top:653.84px;font-size:12px;letter-spacing:0.310px;color:#bbbbbb;">4 spaces</span>
<span class="t" style="left:991.30px;top:88.84px;font-size:12px;letter-spacing:0.300px;color:#bbbbbb;">8</span>
<span class="vt" style="left:2.20px;top:101.00px;transform:rotate(-90deg);letter-spacing:-0.099px;color:#d2d2d2">Project</span>
<span class="vt" style="left:2.20px;top:186.30px;transform:rotate(-90deg);letter-spacing:0.180px;color:#bbbbbb">Structure</span>
<span class="vt" style="left:2.20px;top:599.30px;transform:rotate(-90deg);letter-spacing:-0.008px;color:#bbbbbb">Bookmarks</span>
<span class="vt" style="left:1062.70px;top:83.50px;transform:rotate(90deg);letter-spacing:-0.190px;color:#bbbbbb">Database</span>
<span class="vt" style="left:1062.70px;top:169.60px;transform:rotate(90deg);letter-spacing:-0.398px;color:#bbbbbb">SciView</span>
</body></html>
